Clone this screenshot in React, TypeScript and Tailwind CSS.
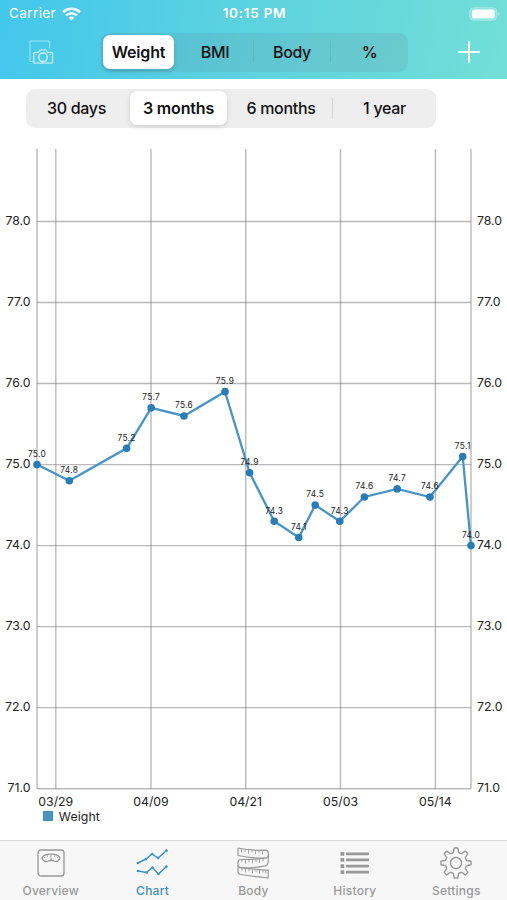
import * as React from "react";
import {useState} from "react";

type Reading = { x: number, value: number }

const SERIES = ['Weight', 'BMI', 'Body', '%']
const RANGES = ['30 days', '3 months', '6 months', '1 year']

const READINGS: Array<Reading> = [
  {x: 37, value: 75.0},
  {x: 69.3, value: 74.8},
  {x: 126.6, value: 75.2},
  {x: 151.2, value: 75.7},
  {x: 184, value: 75.6},
  {x: 225, value: 75.9},
  {x: 249.6, value: 74.9},
  {x: 274.2, value: 74.3},
  {x: 298.8, value: 74.1},
  {x: 315.2, value: 74.5},
  {x: 339.8, value: 74.3},
  {x: 364.4, value: 74.6},
  {x: 397.2, value: 74.7},
  {x: 430, value: 74.6},
  {x: 462.7, value: 75.1},
  {x: 471, value: 74.0},
]

const DATES = [
  {x: 55.8, label: '03/29'},
  {x: 151, label: '04/09'},
  {x: 245.7, label: '04/21'},
  {x: 340.5, label: '05/03'},
  {x: 435.4, label: '05/14'},
]

const LEVELS = [71, 72, 73, 74, 75, 76, 77, 78]

const LEFT = 37
const RIGHT = 471
const TOP = 21
const BOTTOM = 660.7

const toY = (value: number): number => BOTTOM - (value - 71) * 81.03

function StatusBar() {
  return (
      <div className="grid h-[27px] grid-cols-3 items-center pl-[9px] pr-[7px] text-[13.5px] text-white">
        <div className="flex items-center gap-[6px] tracking-[0.4px]">
          Carrier
          <svg width="19" height="14" viewBox="0 0 19 14" fill="none" stroke="white" strokeWidth="2.5">
            <path d="M1 5.1C5.8.6 13.2.6 18 5.1"/>
            <path d="M4.1 8.3C7.2 5.4 11.8 5.4 14.9 8.3"/>
            <path d="M9.5 13.4 6.7 10.6C8.3 9.2 10.7 9.2 12.3 10.6Z" fill="white" stroke="none"/>
          </svg>
        </div>
        <div className="text-center font-semibold tracking-[0.75px]">10:15 PM</div>
        <div className="flex justify-end">
          <svg width="31" height="14" viewBox="0 0 31 14">
            <rect x=".8" y=".8" width="27" height="12.4" rx="4" fill="white" fillOpacity=".12" stroke="white" strokeOpacity=".4"/>
            <rect x="2.8" y="2.4" width="23" height="9.2" rx="2.6" fill="white"/>
            <path d="M29.3 5.2c1.4.6 1.4 3 0 3.6Z" fill="white" fillOpacity=".5"/>
          </svg>
        </div>
      </div>
  )
}

function CameraIcon() {
  return (
      <svg width="25" height="25" viewBox="0 0 25 25" fill="none" stroke="white" strokeOpacity=".65">
        <path d="M20.5 8.500V1H1v20.500h3" strokeOpacity=".5"/>
        <path d="M6 12.400h3.600l1.700-2.500h5.500l1.700 2.500h3.900c.8 0 1.200.4 1.200 1.200v8.300c0 .8-.4 1.200-1.200 1.200H5.900c-.8 0-1.200-.4-1.200-1.200v-8.300c0-.8.4-1.200 1.300-1.200Z" strokeWidth="1.400"/>
        <circle cx="14" cy="17.200" r="4.300" strokeWidth="1.800"/>
        <path d="M20.500 14.700h1.500M6.400 14.600h1.500"/>
      </svg>
  )
}

function Chart() {
  return (
      <svg className="block" width="507" height="712" viewBox="0 0 507 712" fill="#222">
        <g stroke="#808080" strokeOpacity=".55" strokeWidth="1.4">
          {LEVELS.map(level => <line key={level} x1={LEFT} x2={RIGHT} y1={toY(level)} y2={toY(level)}/>)}
          {DATES.map(date => <line key={date.label} x1={date.x} x2={date.x} y1={TOP} y2={BOTTOM}/>)}
          <line x1={LEFT} x2={LEFT} y1={TOP} y2={BOTTOM}/>
          <line x1={RIGHT} x2={RIGHT} y1={TOP} y2={BOTTOM}/>
        </g>
        <g fontSize="12.3">
          {LEVELS.map(level => (
              <React.Fragment key={level}>
                <text x="30.5" y={toY(level) + 3.6} textAnchor="end">{level.toFixed(1)}</text>
                <text x="477" y={toY(level) + 3.6}>{level.toFixed(1)}</text>
              </React.Fragment>
          ))}
          {DATES.map(date => <text key={date.label} x={date.x} y="677.5" textAnchor="middle">{date.label}</text>)}
        </g>
        <polyline
            points={READINGS.map(r => `${r.x},${toY(r.value)}`).join(' ')}
            fill="none"
            stroke="#4694c8"
            strokeWidth="2.3"
        />
        {READINGS.map(r => <circle key={r.x} cx={r.x} cy={toY(r.value)} r="3.8" fill="#277db8"/>)}
        <g fontSize="8.4" textAnchor="middle" letterSpacing=".3">
          {READINGS.map(r => <text key={r.x} x={r.x} y={toY(r.value) - 7.8}>{r.value.toFixed(1)}</text>)}
        </g>
        <rect x="43" y="683" width="10" height="10" fill="#4393c3"/>
        <text x="58.8" y="692.5" fontSize="12.3" letterSpacing=".1">Weight</text>
      </svg>
  )
}

function ScaleIcon() {
  return (
      <svg width="28" height="28" viewBox="0 0 28 28" fill="none" stroke="currentColor" strokeWidth="1.3">
        <rect x="1" y="1" width="26" height="26" rx="3"/>
        <path d="M5 9C6.500 3.700 21.500 3.700 23 9c.2 1-2.600 3.700-4 3.500-3-1-7-1-10 0C7.600 12.700 4.800 10 5 9Z"/>
        <path d="M14 5.500v5.500M10 6.300l.6 1.500M18 6.300l-.6 1.500M7.200 8l1 1M20.800 8l-1 1" strokeWidth=".9"/>
        <circle cx="14" cy="10.700" r=".8" fill="currentColor" stroke="none"/>
      </svg>
  )
}

const CHART_LINES = [
  [[2, 14], [10, 10], [16, 5], [22, 9], [30.5, 1.5]],
  [[2, 22], [10.5, 23.5], [16.5, 18.5], [22.5, 25], [30.5, 17.5]],
]

function ChartIcon() {
  return (
      <svg width="33" height="28" viewBox="0 0 33 28" fill="currentColor">
        {CHART_LINES.map((line, i) => (
            <g key={i}>
              <polyline points={line.join(' ')} fill="none" stroke="currentColor" strokeWidth="1.5"/>
              {line.map(([x, y]) => <circle key={x} cx={x} cy={y} r="1.3"/>)}
            </g>
        ))}
      </svg>
  )
}

function TapeIcon() {
  return (
      <svg width="34" height="32" viewBox="0 0 34 32" fill="none" stroke="currentColor" strokeWidth="1.2" strokeLinejoin="round">
        <path d="M2 1C11 3 21 3.500 29.500 3.200c2 0 2.700.8 2.700 2.500v8.500c0 3-1 4.500-4 5C20 20.700 12 20.800 5 20.800"/>
        <path d="M2 1v7.500c9 2 19 2.800 27.500 2.500 1.700 0 2.700-1 2.700-2.500"/>
        <path d="M29.500 11C21 12.800 13 12.500 5 12.500c-2 0-3 .9-3 3V25c0 1.700.9 2.200 2.500 2.500 9 1.500 18 2.500 27.700 3.500v-7.800C23 22.700 14 21.800 5 20.800c-2-.2-3-1.300-3-3"/>
        <path d="M5.500 2v3M9 2.500v2.500M12.500 2.800v4M16 3v2.500M19.500 3.200v4M23 3.300v2.500M26.500 3.300v4M6 12.800v2.500M9.500 12.800v4M13 12.800v2.500M16.500 12.600v4M20 12.500v2.500M23.500 12v4M27 11.500v2.500M6 21v2.500M9.500 21.400v4M13 21.800v2.500M16.500 22.200v4M20 22.500v2.500M23.500 22.800v4M27 23v2.500M29.800 23.200v3.500" strokeWidth=".9"/>
      </svg>
  )
}

function ListIcon() {
  return (
      <svg width="29" height="24" viewBox="0 0 29 24" fill="currentColor">
        {[1, 7, 13.2, 19.3].map(y => (
            <g key={y}>
              <rect x=".5" y={y} width="3.7" height="3.7" rx=".5"/>
              <rect x="6" y={y + 0.5} width="23" height="2.7" rx=".6"/>
            </g>
        ))}
      </svg>
  )
}

// one tooth plus the valley to its right, turned eight times
const TOOTH = "M13.500 4.800 14.200 1h3.600l.7 3.800c.3 1.300 2.800 2.300 3.900 1.600"

function GearIcon() {
  return (
      <svg width="32" height="32" viewBox="0 0 32 32" fill="none" stroke="currentColor" strokeWidth="1.4" strokeLinejoin="round">
        {[0, 45, 90, 135, 180, 225, 270, 315].map(angle => (
            <path key={angle} d={TOOTH} transform={`rotate(${angle} 16 16)`}/>
        ))}
        <circle cx="16" cy="16" r="5.5"/>
      </svg>
  )
}

const TABS = [
  {name: 'Overview', icon: <ScaleIcon/>},
  {name: 'Chart', icon: <ChartIcon/>},
  {name: 'Body', icon: <TapeIcon/>},
  {name: 'History', icon: <ListIcon/>},
  {name: 'Settings', icon: <GearIcon/>},
]

export default function App() {
  const [series, setSeries] = useState('Weight')
  const [range, setRange] = useState('3 months')
  const [tab, setTab] = useState('Chart')

  return (
      <div className="flex h-[900px] w-[507px] flex-col overflow-hidden bg-white font-[Inter,sans-serif] text-[#111]">
        <header className="h-[79px] shrink-0 bg-[linear-gradient(100deg,#43c7ec_0%,#5dd3df_50%,#72dfd7_100%)]">
          <StatusBar/>
          <div className="flex items-start pt-[6px]">
            <button className="ml-[29px] mt-[7px] w-[72px]"><CameraIcon/></button>
            <div className="grid h-[39px] w-[307px] grid-cols-[76px_77px_77px_77px] rounded-[9px] bg-[#6b7884]/15 py-[2px]">
              {SERIES.map((name, i) => (
                  <button
                      key={name}
                      onClick={() => setSeries(name)}
                      className={name === series
                          ? "mb-px ml-[2px] mr-[3px] rounded-[7px] bg-white text-[16px] font-semibold tracking-[-0.2px] shadow-[0_2px_5px_rgba(0,0,0,0.16)]"
                          : "flex items-center pb-[2px] text-[16px] font-medium tracking-[-0.4px]"}
                  >
                    <span className="flex-1">{name}</span>
                    {name !== series && i < 3 && <span className="h-[21px] w-px bg-[#4b8790]/20"/>}
                  </button>
              ))}
            </div>
            <button className="ml-[50px] mt-[8px]">
              <svg width="22" height="22" viewBox="0 0 22 22" stroke="white" strokeWidth="2" strokeLinecap="round">
                <path d="M11 1v20M1 11h20"/>
              </svg>
            </button>
          </div>
        </header>

        <div className="ml-[26px] mt-[10px] grid h-[39px] w-[410px] shrink-0 grid-cols-[101px_103px_103px_103px] rounded-[9px] bg-[#eeeeef] py-[2px]">
          {RANGES.map((name, i) => (
              <button
                  key={name}
                  onClick={() => setRange(name)}
                  className={name === range
                      ? "mx-[3px] mb-px rounded-[7px] bg-white text-[16px] font-semibold tracking-[-0.15px] shadow-[0_2px_5px_rgba(0,0,0,0.13)]"
                      : "flex items-center pb-px text-[16px] font-medium tracking-[-0.3px]"}
              >
                <span className="flex-1">{name}</span>
                {i === 2 && <span className="h-[21px] w-px bg-[#d5d5d7]"/>}
              </button>
          ))}
        </div>

        <Chart/>

        <nav className="grid h-[60px] shrink-0 grid-cols-5 border-t border-[#d9d9d9] bg-[#f7f7f7]">
          {TABS.map(({name, icon}) => (
              <button
                  key={name}
                  onClick={() => setTab(name)}
                  className={name === tab
                      ? "flex flex-col items-center pl-px text-[#3e8fc8]"
                      : "flex flex-col items-center text-[#999]"}
              >
                <span className="mt-[4px] flex h-[36px] items-center">{icon}</span>
                <span className="mt-[2px] text-[12px] font-medium leading-[15px] tracking-[0.25px]">{name}</span>
              </button>
          ))}
        </nav>
      </div>
  );
}
